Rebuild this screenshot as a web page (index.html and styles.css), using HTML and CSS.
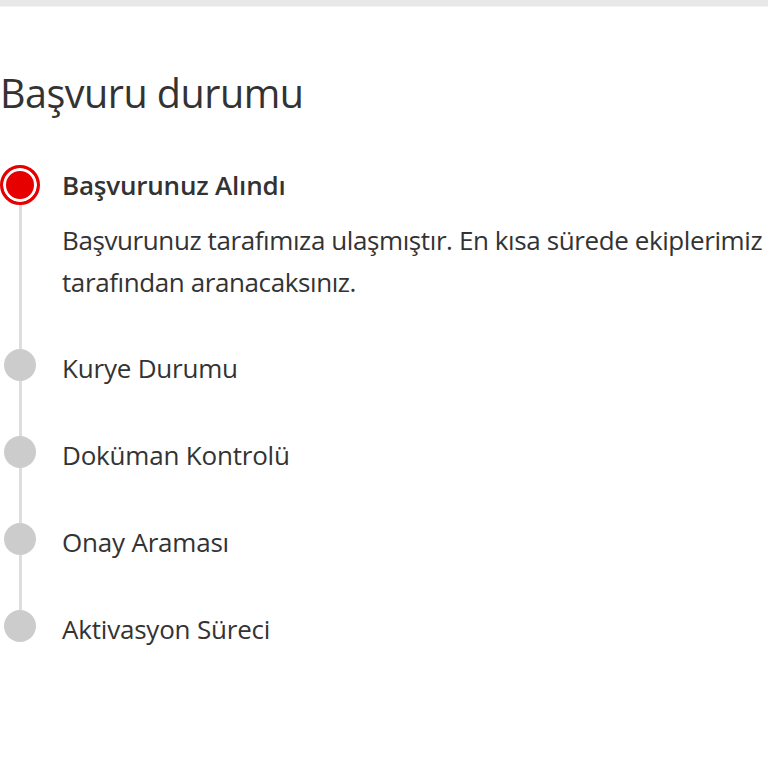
FILE: index.html
```html
<!DOCTYPE html>
<html lang="tr">
<head>
  <meta charset="UTF-8" />
  <meta name="viewport" content="width=device-width, initial-scale=1.0"/>
  <title>Başvuru durumu</title>
  <link rel="stylesheet" href="styles.css">
</head>
<body>
  <div class="topbar"></div>
  <div class="status-page">
    <h1 class="status-title">Başvuru durumu</h1>
    <ul class="steps">
      <li class="step active">
        <div class="marker">
          <span class="dot"></span>
          <span class="line"></span>
        </div>
        <div class="step-body">
          <div class="step-name">Başvurunuz Alındı</div>
          <p class="step-desc">Başvurunuz tarafımıza ulaşmıştır. En kısa sürede ekiplerimiz tarafından aranacaksınız.</p>
        </div>
      </li>
      <li class="step">
        <div class="marker">
          <span class="dot"></span>
          <span class="line"></span>
        </div>
        <div class="step-body">
          <div class="step-name">Kurye Durumu</div>
        </div>
      </li>
      <li class="step">
        <div class="marker">
          <span class="dot"></span>
          <span class="line"></span>
        </div>
        <div class="step-body">
          <div class="step-name">Doküman Kontrolü</div>
        </div>
      </li>
      <li class="step">
        <div class="marker">
          <span class="dot"></span>
          <span class="line"></span>
        </div>
        <div class="step-body">
          <div class="step-name">Onay Araması</div>
        </div>
      </li>
      <li class="step last">
        <div class="marker">
          <span class="dot"></span>
        </div>
        <div class="step-body">
          <div class="step-name">Aktivasyon Süreci</div>
        </div>
      </li>
    </ul>
  </div>
</body>
</html>
```

FILE: styles.css
```css
body {
  font-family: 'Open Sans', 'Lato', sans-serif;
  margin: 0;
  padding: 0;
  background: #fff;
  color: #333;
  overflow: hidden;
}

.topbar {
  height: 6px;
  background-color: #e8e8e8;
  border-bottom: 1px solid #f3f3f3;
}

.status-page {
  width: 840px;
}

.status-title {
  font-size: 39.5px;
  font-weight: 400;
  margin: 58px 0 0 0;
  line-height: 56px;
  letter-spacing: -0.5px;
  color: #333;
}

.steps {
  list-style: none;
  margin: 44px 0 0 0;
  padding: 0;
}

.step {
  display: flex;
  min-height: 87px;
}

.marker {
  width: 40px;
  display: flex;
  flex-direction: column;
  align-items: center;
  flex-shrink: 0;
}

.dot {
  width: 32px;
  height: 32px;
  border-radius: 50%;
  background-color: #cccccc;
  flex-shrink: 0;
}

.line {
  flex: 1;
  width: 3px;
  background-color: #dddddd;
}

.step.active .dot {
  width: 40px;
  height: 40px;
  box-sizing: border-box;
  background-color: #e60000;
  border: 3px solid #e60000;
  box-shadow: inset 0 0 0 3px #fff;
}

.step-body {
  padding-left: 22px;
}

.step-name {
  font-size: 26px;
  line-height: 40px;
  margin-top: -1px;
  letter-spacing: -0.2px;
}

.step.active .step-name {
  font-weight: 600;
  margin-top: 0;
}

.step.active .step-body {
  padding-bottom: 46px;
}

.step-desc {
  font-size: 26px;
  line-height: 42px;
  margin: 14px 0 0 0;
  width: 760px;
  letter-spacing: -0.4px;
}
```
